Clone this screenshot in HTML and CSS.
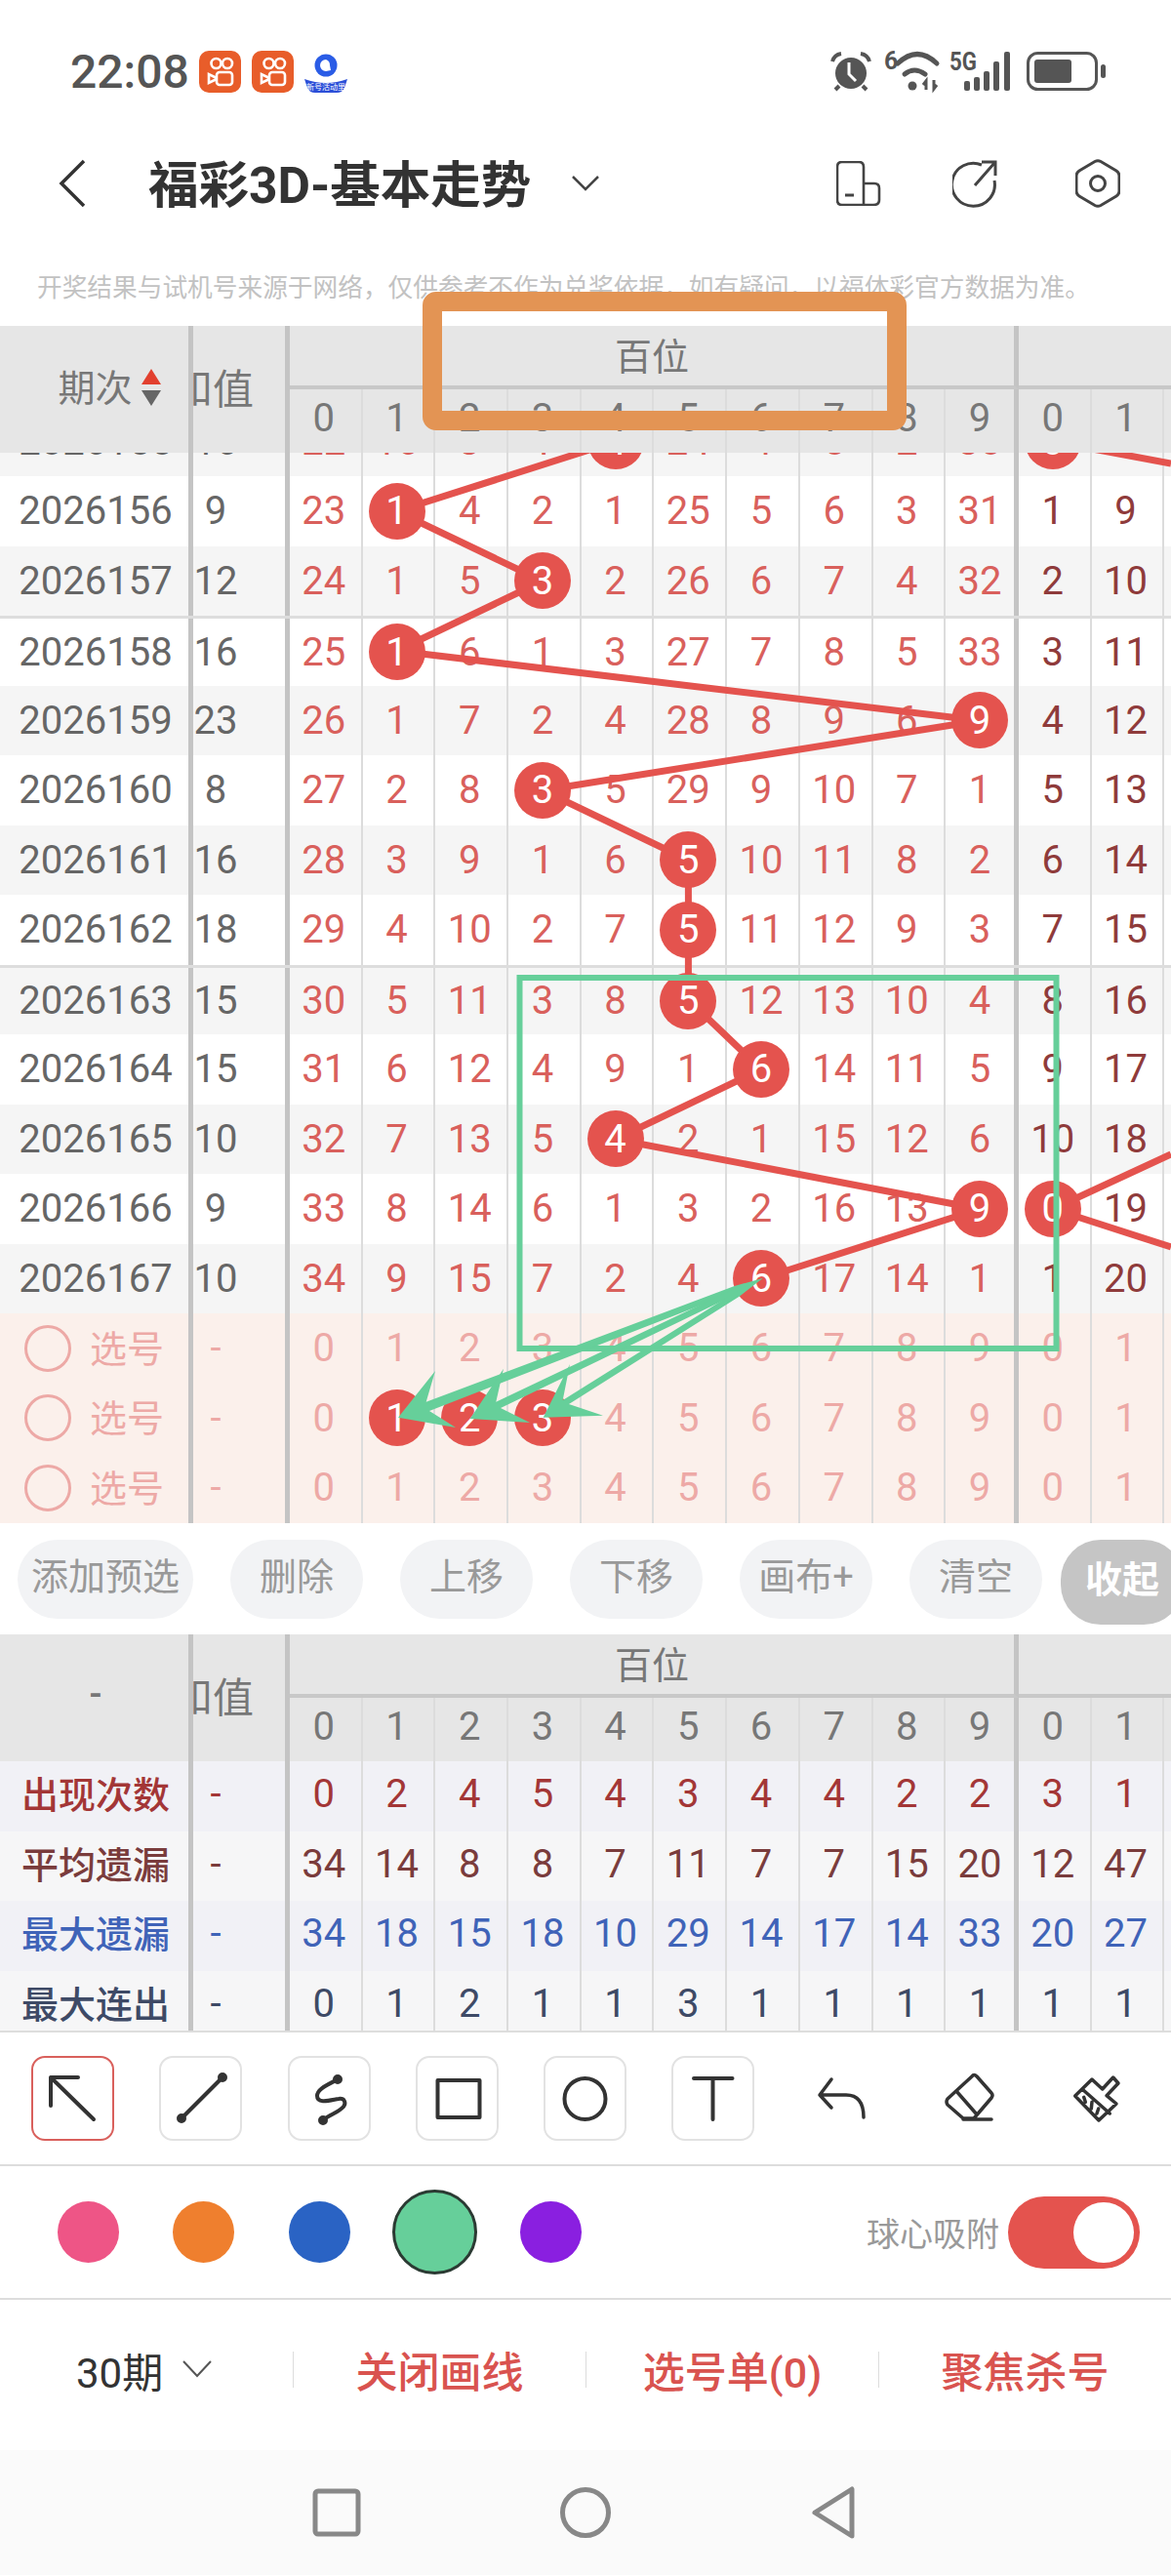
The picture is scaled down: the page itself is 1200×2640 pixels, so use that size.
FILE: index.html
```html
<!DOCTYPE html>
<html lang="zh-CN">
<head>
    <meta charset="UTF-8">
    <meta name="viewport" content="width=device-width, initial-scale=1.0">
    <title>福彩3D-基本走势</title>
    <link rel="stylesheet" href="styles.css">
</head>
<body>
    <div class="status-bar">
        <span class="clock">22:08</span>
        <svg class="app-icon" viewBox="0 0 43 43"><rect width="43" height="43" rx="10" fill="#e85d2a"/><g fill="none" stroke="#fff" stroke-width="2.6"><circle cx="17.5" cy="13" r="5"/><circle cx="29" cy="13" r="5"/><rect x="18" y="22" width="16" height="13" rx="3"/><path d="M18 28 10 24v9l8-4"/></g></svg>
        <svg class="app-icon" viewBox="0 0 43 43"><rect width="43" height="43" rx="10" fill="#e85d2a"/><g fill="none" stroke="#fff" stroke-width="2.6"><circle cx="17.5" cy="13" r="5"/><circle cx="29" cy="13" r="5"/><rect x="18" y="22" width="16" height="13" rx="3"/><path d="M18 28 10 24v9l8-4"/></g></svg>
        <svg class="app-icon app-icon-last" viewBox="0 0 44 43"><circle cx="22" cy="15" r="11.5" fill="#2a5ce6"/><path d="M22 9a6 6 0 1 0 0 12l5-1-1-5a6 6 0 0 0-4-6z" fill="#fff"/><path d="M0 29q22 8 44 0l-3 9q-2 5-8 5H11q-6 0-8-5z" fill="#2c4fd8"/><text x="22" y="40" text-anchor="middle" class="tiny-label">新号活动里</text></svg>
        <div class="status-right">
            <svg width="40" height="40" viewBox="0 0 40 40"><circle cx="20" cy="22" r="16" fill="#555"/><path d="M1 10q2-7 9-8M39 10q-2-7-9-8" fill="none" stroke="#555" stroke-width="4"/><path d="M8 35l-4 4M32 35l4 4" stroke="#555" stroke-width="4"/><path d="M18 11v12l7 7" fill="none" stroke="#fff" stroke-width="3"/></svg>
            <svg width="56" height="40" viewBox="0 0 56 40"><text x="0" y="18" class="net-label">6</text><path d="M14 12Q34-7 54 12M21 23Q31 15 42 23" fill="none" stroke="#555" stroke-width="5" stroke-linecap="round"/><circle cx="29" cy="35" r="4.500" fill="#555"/><path d="M43 39V30l-3 4M51 29v9l3-4" fill="none" stroke="#555" stroke-width="3"/></svg>
            <svg class="signal" width="62" height="40" viewBox="0 0 62 40"><text x="0" y="19" class="net-label" textLength="28" lengthAdjust="spacingAndGlyphs">5G</text><g fill="#555"><rect x="15" y="30" width="6" height="10" rx="2"/><rect x="25" y="26" width="6" height="14" rx="2"/><rect x="35" y="20" width="6" height="20" rx="2"/><rect x="45" y="10" width="6" height="30" rx="2"/><rect x="56" y="0" width="6" height="40" rx="2"/></g></svg>
            <svg class="battery" width="81" height="40" viewBox="0 0 81 40"><rect x="1.5" y="1.5" width="70" height="37" rx="10" fill="none" stroke="#555" stroke-width="3"/><rect x="8" y="8" width="38" height="24" rx="3" fill="#555"/><rect x="76" y="13" width="5" height="14" rx="2.5" fill="#555"/></svg>
        </div>
    </div>

    <div class="title-bar">
        <svg class="back-icon" width="28" height="50" viewBox="0 0 28 50"><path d="M26 2 3 25l23 23" fill="none" stroke="#333" stroke-width="3.5"/></svg>
        <h1 class="page-title">福彩3D-基本走势</h1>
        <svg class="title-caret" width="28" height="16" viewBox="0 0 28 16"><path d="M1 1l13 13L27 1" fill="none" stroke="#444" stroke-width="2.5"/></svg>
        <div class="title-actions">
            <svg width="46" height="46" viewBox="0 0 46 46"><path d="M28 23V6q0-5-5-5H6Q1 1 1 6v34q0 5 5 5h32q6 0 6-5V28q0-5-5-5H28v22" fill="none" stroke="#444" stroke-width="2.6"/><path d="M9 35h9" stroke="#444" stroke-width="3"/></svg>
            <svg width="46" height="50" viewBox="0 0 46 50"><path d="M30 6A22 22 0 1 0 43 22" fill="none" stroke="#444" stroke-width="3"/><path d="M23 27 44 3M30 3h14v14" fill="none" stroke="#444" stroke-width="3"/></svg>
            <svg class="hex-icon" width="46" height="50" viewBox="0 0 46 50"><path d="M20 2.500q3-1.500 6 0l16 9.500q3 2 3 5v16q0 3-3 5l-16 9.500q-3 1.500-6 0l-16-9.500q-3-2-3-5V17q0-3 3-5z" fill="none" stroke="#444" stroke-width="3"/><circle cx="23" cy="25" r="7.500" fill="none" stroke="#444" stroke-width="3"/></svg>
        </div>
    </div>

    <p class="notice">开奖结果与试机号来源于网络，仅供参考不作为兑奖依据，如有疑问，以福体彩官方数据为准。</p>

    <section class="chart">
        <div class="chart-head" id="mainHead"></div>
        <div class="chart-body">
            <div class="chart-rows" id="mainRows"></div>
            <svg class="trend-lines" width="1200" height="1097" viewBox="0 464 1200 1097">
                <g fill="none" stroke="#e4534e" stroke-width="7">
                    <polyline points="630.6,452.500 406.500,524 556,595.500 406.500,667 1004,738.500 556,810 705.400,881.500 705.400,953 705.400,1024.500 780,1096 630.600,1167.500 1004,1239 780,1310.500"/>
                    <path d="M1079 452.500 1200 475M1079 1239 1200 1183M1079 1239 1200 1278"/>
                </g>
            </svg>
        </div>
    </section>

    <div class="action-row">
        <button class="pill-btn">添加预选</button>
        <button class="pill-btn">删除</button>
        <button class="pill-btn">上移</button>
        <button class="pill-btn">下移</button>
        <button class="pill-btn">画布+</button>
        <button class="pill-btn">清空</button>
        <button class="pill-btn pill-collapse">收起</button>
    </div>

    <section class="chart stats">
        <div class="chart-head" id="statsHead"></div>
        <div class="stats-body" id="statsRows"></div>
    </section>

    <div class="tool-row">
        <div class="tool tool-on"><svg width="85" height="87" viewBox="0 0 85 87"><path d="M48 22H20v29M20 22l44 43"/></svg></div>
        <div class="tool"><svg width="85" height="87" viewBox="0 0 85 87"><path d="M65 22 23 64"/><circle class="dot" cx="65" cy="22" r="3"/><circle class="dot" cx="23" cy="64" r="3"/></svg></div>
        <div class="tool"><svg width="85" height="87" viewBox="0 0 85 87"><path d="M51 24C40 30 30 34 30 41 30 50 45 45 52 44 58 43 60 48 57 52 52 58 43 60 36 66"/><circle class="dot" cx="51" cy="24" r="3"/><circle class="dot" cx="36" cy="66" r="3"/></svg></div>
        <div class="tool"><svg width="85" height="87" viewBox="0 0 85 87"><rect x="22.500" y="25" width="43" height="38"/></svg></div>
        <div class="tool"><svg width="85" height="87" viewBox="0 0 85 87"><circle cx="42.500" cy="44" r="21"/></svg></div>
        <div class="tool"><svg width="85" height="87" viewBox="0 0 85 87"><path d="M23 23H62.500M42.500 23V65"/></svg></div>
        <div class="tool tool-plain"><svg width="85" height="87" viewBox="0 0 85 87"><path d="M32 24 20 40l12 13M20 40H47Q65 40 65 63"/></svg></div>
        <div class="tool tool-plain"><svg width="85" height="87" viewBox="0 0 85 87"><path d="M45 21Q47 18 50 21L65 38Q67 40 65 43L47 64H36L20 50Q18 47 20 44ZM29 36 50 60M36 65H65"/></svg></div>
        <div class="tool tool-plain"><svg width="85" height="87" viewBox="0 0 85 87"><path d="M58.700 22 64 28 52 40.700 62 49 44 66 19.700 41 37 24 47.700 34ZM27 34 55.300 59M28.700 42.300 30.300 47.300M37 47.300 36.300 54M43.700 54 42 59"/></svg></div>
    </div>

    <div class="color-row">
        <span class="swatch-slot"><i class="swatch swatch-pink"></i></span>
        <span class="swatch-slot"><i class="swatch swatch-orange"></i></span>
        <span class="swatch-slot"><i class="swatch swatch-blue"></i></span>
        <span class="swatch-slot"><i class="swatch swatch-green"></i></span>
        <span class="swatch-slot"><i class="swatch swatch-purple"></i></span>
        <div class="snap-box">
            <span class="snap-label">球心吸附</span>
            <span class="toggle"><i class="toggle-knob"></i></span>
        </div>
    </div>

    <div class="bottom-bar">
        <div class="bottom-slot period">30期
            <svg width="30" height="18" viewBox="0 0 30 18"><path d="M1 1l14 15L29 1" fill="none" stroke="#555" stroke-width="2"/></svg>
        </div>
        <div class="bottom-slot link">关闭画线</div>
        <div class="bottom-slot link">选号单(0)</div>
        <div class="bottom-slot link">聚焦杀号</div>
    </div>

    <div class="nav-bar">
        <svg width="60" height="60" viewBox="0 0 60 60"><rect x="8" y="8" width="44" height="44" rx="3"/></svg>
        <svg width="60" height="60" viewBox="0 0 60 60"><circle cx="30" cy="30" r="23.500"/></svg>
        <svg width="60" height="60" viewBox="0 0 60 60"><path d="M48 6V54L10 30Z"/></svg>
    </div>

    <svg class="markup" width="1200" height="2640" viewBox="0 0 1200 2640">
        <rect x="443" y="309" width="476" height="122" rx="4" fill="none" stroke="#e39454" stroke-width="20"/>
        <rect x="532.500" y="1002" width="550" height="380" fill="none" stroke="#66cf9a" stroke-width="6"/>
        <g fill="#66cf9a">
            <polygon points="408,1452.700 446,1405 436.700,1436.700 752.600,1318 781.700,1310 754.800,1323.600 440,1446 467,1463"/>
            <polygon points="481.700,1454 516,1402.700 508.300,1436.700 753.400,1320.300 781.700,1310 756,1325.700 513,1443 543,1458"/>
            <polygon points="556.700,1452.700 584,1398 576.700,1435 754.700,1323.500 781.700,1310 757.900,1328.500 583,1439 618,1450.700"/>
        </g>
    </svg>

    <script>
        // 走势数据，* 表示开奖号码（红球）
        const mainData = [
            ['2026155', 16, [22, 16, 3, 1, '*4', 24, 4, 5, 2, 30, '*0', 8], 'grey'],
            ['2026156', 9, [23, '*1', 4, 2, 1, 25, 5, 6, 3, 31, 1, 9], ''],
            ['2026157', 12, [24, 1, 5, '*3', 2, 26, 6, 7, 4, 32, 2, 10], 'grey'],
            ['2026158', 16, [25, '*1', 6, 1, 3, 27, 7, 8, 5, 33, 3, 11], 'split'],
            ['2026159', 23, [26, 1, 7, 2, 4, 28, 8, 9, 6, '*9', 4, 12], 'grey'],
            ['2026160', 8, [27, 2, 8, '*3', 5, 29, 9, 10, 7, 1, 5, 13], ''],
            ['2026161', 16, [28, 3, 9, 1, 6, '*5', 10, 11, 8, 2, 6, 14], 'grey'],
            ['2026162', 18, [29, 4, 10, 2, 7, '*5', 11, 12, 9, 3, 7, 15], ''],
            ['2026163', 15, [30, 5, 11, 3, 8, '*5', 12, 13, 10, 4, 8, 16], 'grey split'],
            ['2026164', 15, [31, 6, 12, 4, 9, 1, '*6', 14, 11, 5, 9, 17], ''],
            ['2026165', 10, [32, 7, 13, 5, '*4', 2, 1, 15, 12, 6, 10, 18], 'grey'],
            ['2026166', 9, [33, 8, 14, 6, 1, 3, 2, 16, 13, '*9', '*0', 19], ''],
            ['2026167', 10, [34, 9, 15, 7, 2, 4, '*6', 17, 14, 1, 1, 20], 'grey']
        ];
        const statsData = [
            ['出现次数', [0, 2, 4, 5, 4, 3, 4, 4, 2, 2, 3, 1], 'stat-count'],
            ['平均遗漏', [34, 14, 8, 8, 7, 11, 7, 7, 15, 20, 12, 47], 'stat-avg'],
            ['最大遗漏', [34, 18, 15, 18, 10, 29, 14, 17, 14, 33, 20, 27], 'stat-max'],
            ['最大连出', [0, 1, 2, 1, 1, 3, 1, 1, 1, 1, 1, 1], 'stat-run']
        ];

        function cell(text, cls) {
            const el = document.createElement('div');
            el.className = 'cell ' + (cls || '');
            if (text !== undefined && text !== '') el.textContent = text;
            return el;
        }

        function addNumbers(row, values) {
            values.forEach(function(v, i) {
                let cls = i === 9 ? 'col-end' : '';
                if (i > 9) cls += ' tens';
                const c = cell('', cls);
                if (String(v)[0] === '*') {
                    const ball = document.createElement('span');
                    ball.className = 'ball';
                    ball.textContent = String(v).slice(1);
                    c.appendChild(ball);
                } else {
                    c.textContent = v;
                }
                row.appendChild(c);
            });
        }

        function buildHead(id, label) {
            const head = document.getElementById(id);
            const first = cell('', 'name-cell head-name');
            first.innerHTML = label;
            head.appendChild(first);
            head.appendChild(cell('和值', 'sum-cell head-sum'));
            head.appendChild(cell('百位', 'group-cell col-end'));
            head.appendChild(cell('', 'group-cell group-next'));
            [0, 1, 2, 3, 4, 5, 6, 7, 8, 9, 0, 1].forEach(function(d, i) {
                head.appendChild(cell(d, i === 9 ? 'col-end' : ''));
            });
            head.appendChild(cell('', 'stub'));
        }

        buildHead('mainHead', '<span>期次</span><svg class="sort-icon" width="20" height="38" viewBox="0 0 20 38"><path d="M10 0 20 16H0Z" fill="#e2402f"/><path d="M0 22H20L10 38Z" fill="#666"/></svg>');
        buildHead('statsHead', '-');

        const mainRows = document.getElementById('mainRows');
        mainData.forEach(function(d) {
            const row = document.createElement('div');
            row.className = 'row ' + d[3];
            row.appendChild(cell(d[0], 'name-cell'));
            row.appendChild(cell(d[1], 'sum-cell'));
            addNumbers(row, d[2]);
            mainRows.appendChild(row);
        });

        // 选号行
        [[], ['1', '2', '3'], []].forEach(function(balls) {
            const row = document.createElement('div');
            row.className = 'row pick-row';
            const name = cell('', 'name-cell pick-name');
            name.innerHTML = '<i class="pick-ring"></i><span>选号</span>';
            row.appendChild(name);
            row.appendChild(cell('-', 'sum-cell'));
            const nums = [0, 1, 2, 3, 4, 5, 6, 7, 8, 9, 0, 1].map(function(n, i) {
                return i < 10 && balls.indexOf(String(n)) > -1 ? '*' + n : n;
            });
            addNumbers(row, nums);
            mainRows.appendChild(row);
        });

        const statsRows = document.getElementById('statsRows');
        statsData.forEach(function(d) {
            const row = document.createElement('div');
            row.className = 'row ' + d[2];
            row.appendChild(cell(d[0], 'name-cell'));
            row.appendChild(cell('-', 'sum-cell'));
            addNumbers(row, d[1]);
            statsRows.appendChild(row);
        });
    </script>
</body>
</html>
```

FILE: styles.css
```css
/* 页面基础 */
body {
    position: relative;
    width: 1200px;
    height: 2640px;
    margin: 0;
    overflow: hidden;
    background-color: #fff;
    font-family: Roboto, "Noto Sans CJK SC", sans-serif;
    color: #333;
}

/* 状态栏 */
.status-bar {
    display: flex;
    align-items: center;
    height: 146px;
    padding: 0 67px 0 72px;
    box-sizing: border-box;
}

.clock {
    width: 132px;
    font-size: 48px;
    font-weight: 500;
    color: #555;
}

.app-icon {
    width: 43px;
    height: 43px;
    margin-right: 11px;
}

.app-icon-last {
    width: 44px;
}

.tiny-label {
    font-size: 8px;
    fill: #fff;
}

.net-label {
    font-size: 25px;
    font-weight: 700;
    fill: #555;
}

.status-right {
    display: flex;
    align-items: center;
    gap: 14px;
    margin-left: auto;
}

.status-right svg {
    overflow: visible;
}

.signal {
    margin-left: -3px;
}

.battery {
    margin-left: 3px;
}

/* 标题栏 */
.title-bar {
    display: flex;
    align-items: center;
    height: 84px;
    padding-left: 60px;
}

.page-title {
    margin: 0 0 0 64px;
    padding-bottom: 6px;
    font-size: 51.5px;
    font-weight: 700;
    color: #333;
}

.title-caret {
    margin-left: 42px;
}

.title-actions {
    display: flex;
    align-items: center;
    gap: 73px;
    margin-left: auto;
    padding-right: 52px;
}

.hex-icon {
    margin-left: 7px;
}

.notice {
    height: 104px;
    margin: 0;
    padding: 46px 0 0 38px;
    box-sizing: border-box;
    font-size: 25.7px;
    line-height: 38px;
    color: #c2c2c2;
    white-space: nowrap;
}

/* 走势表 */
.chart {
    position: relative;
    overflow: hidden;
    font-size: 40px;
    color: #d9605c;
}

.chart-head,
.row {
    display: grid;
    grid-template-columns: 198px 99px repeat(12, 74.7px) 1fr;
}

.chart-head {
    grid-template-rows: 65px 65px;
    background-color: #e6e6e6;
    color: #777;
}

.cell {
    display: flex;
    align-items: center;
    justify-content: center;
    min-width: 0;
    padding-right: 3px;
    box-sizing: border-box;
    border-right: 2px solid #dcdcdc;
}

.chart-head .cell {
    padding-bottom: 6px;
}

.col-end {
    padding-right: 0;
    border-right: 5px solid #c4c4c4;
}

.stub {
    border-right: none;
    padding: 0;
}

.name-cell {
    padding: 0 0 0 3px;
    border-right: 5px solid #c4c4c4;
    color: #666;
    white-space: nowrap;
}

.sum-cell {
    padding: 0 48px 0 0;
    overflow: hidden;
    border-right: 5px solid #c4c4c4;
    color: #666;
    white-space: nowrap;
}

.chart-head .head-name {
    grid-row: span 2;
    padding-bottom: 0;
    font-size: 38px;
    color: #777;
}

.chart-head .head-sum {
    grid-row: span 2;
    padding: 0 54px 8px 0;
    font-size: 42px;
    color: #777;
}

.head-name span {
    margin: 0 9px 10px 28px;
}

.sort-icon {
    flex: none;
    margin-bottom: 4px;
}

.chart-head .group-cell {
    grid-column: span 10;
    padding: 0 0 4px 0;
    border-bottom: 4px solid #c8c8c8;
    font-size: 38px;
}

.chart-head .group-next {
    grid-column: span 3;
    border-right: none;
}

.chart-body {
    position: relative;
    height: 1097px;
    overflow: hidden;
}

.chart-rows {
    margin-top: -47.5px;
}

.row {
    height: 71.5px;
    box-sizing: border-box;
}

.grey {
    background-color: #f5f5f5;
}

.split {
    border-top: 3px solid #ddd;
}

.tens {
    color: #8f3b3b;
}

.ball {
    position: relative;
    z-index: 2;
    display: flex;
    flex: none;
    align-items: center;
    justify-content: center;
    width: 58px;
    height: 58px;
    border-radius: 50%;
    background-color: #e4534e;
    color: #fff;
}

.trend-lines {
    position: absolute;
    top: 0;
    left: 0;
    z-index: 1;
}

.pick-row {
    background-color: #fbf0eb;
    color: #eda9a6;
}

.pick-row .cell {
    color: #eda9a6;
}

.pick-row .name-cell {
    justify-content: flex-start;
    gap: 19px;
    padding-left: 25px;
    font-size: 38px;
}

.pick-name span {
    margin-bottom: 5px;
}

.pick-row .ball {
    color: #fff;
}

.pick-ring {
    width: 48px;
    height: 48px;
    border: 3px solid #eda9a6;
    border-radius: 50%;
    box-sizing: border-box;
}

/* 操作按钮 */
.action-row {
    display: flex;
    align-items: flex-start;
    gap: 38px;
    height: 114px;
    padding: 17px 0 0 18px;
    box-sizing: border-box;
    white-space: nowrap;
}

.pill-btn {
    flex: none;
    width: 136px;
    height: 81px;
    padding: 0 0 12px;
    border: none;
    border-radius: 41px;
    background-color: #f2f3f5;
    font-family: inherit;
    font-size: 38px;
    color: #999;
}

.pill-btn:first-child {
    width: 180px;
}

.pill-collapse {
    width: 126px;
    height: 87px;
    margin-left: -19px;
    background-color: #c5c5c5;
    color: #fff;
    font-weight: 700;
}

/* 统计表 */
.stats {
    border-bottom: 2px solid #ddd;
}

.stats-body {
    height: 276px;
    overflow: hidden;
}

.stats-body .cell {
    padding-bottom: 4px;
}

.stats .row:nth-child(odd) {
    background-color: #f1f1f6;
}

.stats .row:nth-child(even) {
    background-color: #f6f6f7;
}

.stats .name-cell {
    padding-bottom: 8px;
    font-size: 38px;
    font-weight: 500;
}

.stat-count, .stat-count .cell {
    color: #a33636;
}

.stat-avg, .stat-avg .cell {
    color: #7a3c3c;
}

.stat-max, .stat-max .cell {
    color: #3f63b8;
}

.stat-run, .stat-run .cell {
    color: #3e4a66;
}

/* 画线工具 */
.tool-row {
    display: flex;
    gap: 46.3px;
    height: 137px;
    padding: 24px 0 0 32px;
    box-sizing: border-box;
    border-bottom: 2px solid #ddd;
}

.tool {
    flex: none;
    width: 85px;
    height: 87px;
    border: 2px solid #e2e2e2;
    border-radius: 14px;
    box-sizing: border-box;
}

.tool svg {
    display: block;
    margin: -2px;
    fill: none;
    stroke: #333;
    stroke-width: 4;
    stroke-linecap: round;
    stroke-linejoin: round;
}

.tool .dot {
    fill: #333;
}

.tool-on {
    border-color: #d9605c;
}

.tool-plain {
    border-color: transparent;
}

.tool-plain svg {
    stroke-width: 3.5;
}

/* 颜色选择 */
.color-row {
    display: flex;
    align-items: center;
    height: 137px;
    padding: 0 32px 0 31px;
    box-sizing: border-box;
    border-bottom: 2px solid #ddd;
}

.swatch-slot {
    display: flex;
    justify-content: center;
    width: 118.5px;
}

.swatch {
    display: block;
    width: 63px;
    height: 63px;
    border-radius: 50%;
}

.swatch-pink {
    background-color: #ee5586;
}

.swatch-orange {
    background-color: #ef7f2e;
}

.swatch-blue {
    background-color: #2a63c4;
}

.swatch-green {
    width: 87px;
    height: 87px;
    border: 3px solid #2b3a33;
    box-sizing: border-box;
    background-color: #66cf9a;
}

.swatch-purple {
    background-color: #8a1fe0;
}

.snap-box {
    display: flex;
    align-items: center;
    gap: 9px;
    margin-left: auto;
}

.snap-label {
    font-size: 34px;
    color: #999;
}

.toggle {
    display: flex;
    justify-content: flex-end;
    align-items: center;
    width: 135px;
    height: 74px;
    padding-right: 6px;
    box-sizing: border-box;
    border-radius: 37px;
    background-color: #e4534e;
}

.toggle-knob {
    width: 62px;
    height: 62px;
    border-radius: 50%;
    background-color: #fff;
}

/* 底部操作 */
.bottom-bar {
    display: grid;
    grid-template-columns: repeat(4, 300px);
    align-items: center;
    height: 154px;
    padding-bottom: 12px;
    box-sizing: border-box;
}

.bottom-slot {
    display: flex;
    align-items: center;
    justify-content: center;
    height: 37px;
    font-size: 43px;
    white-space: nowrap;
}

.bottom-slot + .bottom-slot {
    border-left: 1px solid #ddd;
}

.period {
    justify-content: flex-start;
    gap: 20px;
    padding-left: 78px;
    color: #333;
    font-size: 42px;
}

.link {
    font-weight: 500;
    color: #d9534f;
}

/* 系统导航 */
.nav-bar {
    display: flex;
    align-items: center;
    justify-content: center;
    gap: 195px;
    height: 128px;
    background-color: #fafafa;
}

.nav-bar svg {
    fill: none;
    stroke: #888;
    stroke-width: 5;
    stroke-linejoin: round;
}

/* 手绘标注 */
.markup {
    position: absolute;
    top: 0;
    left: 0;
    z-index: 5;
    pointer-events: none;
}
```
